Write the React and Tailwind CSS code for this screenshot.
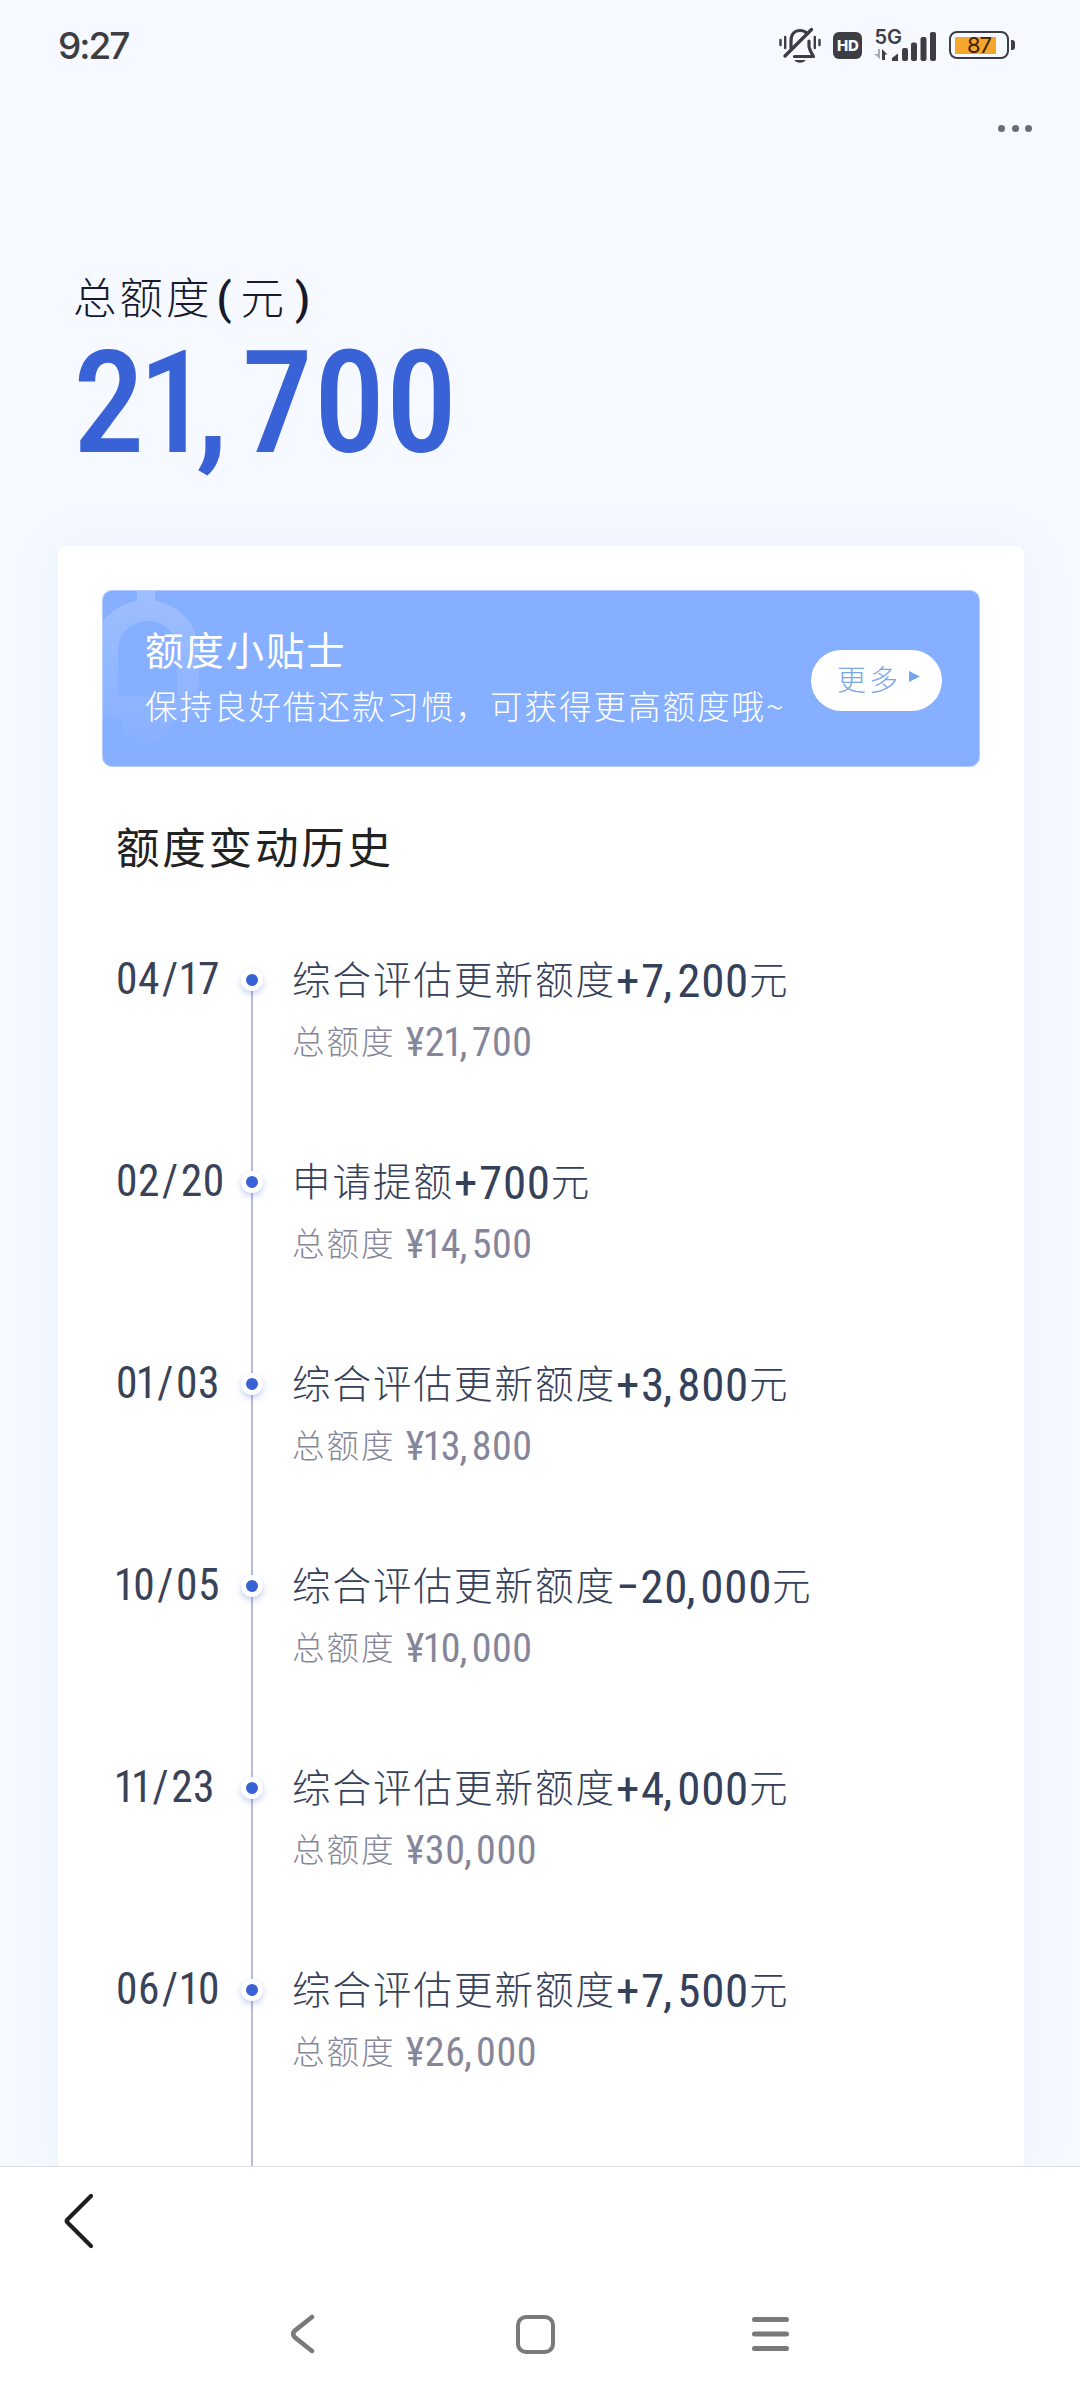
const history = [
  { date: "04/17", title: "综合评估更新额度", change: "+7,200", total: "21,700" },
  { date: "02/20", title: "申请提额", change: "+700", total: "14,500" },
  { date: "01/03", title: "综合评估更新额度", change: "+3,800", total: "13,800" },
  { date: "10/05", title: "综合评估更新额度", change: "−20,000", total: "10,000" },
  { date: "11/23", title: "综合评估更新额度", change: "+4,000", total: "30,000" },
  { date: "06/10", title: "综合评估更新额度", change: "+7,500", total: "26,000" },
];

// narrow "1", wide comma and slash, like the DIN digits of the brand
const spacing = {
  1: "-ml-[0.05em] -mr-[0.06em]",
  ",": "-ml-[0.04em] mr-[0.09em]",
  "/": "mx-[0.05em]",
  "+": "mr-[0.02em]",
};

function Digits({ value, className = "" }) {
  return (
    <span className={`font-['Roboto_Condensed','Roboto',sans-serif] ${className}`}>
      {value.split(/([1,/+])/).map((part, i) =>
        spacing[part] ? (
          <span key={i} className={spacing[part]}>
            {part}
          </span>
        ) : (
          part
        )
      )}
    </span>
  );
}

function MutedBell() {
  return (
    <svg width="42" height="38" viewBox="0 0 42 38" fill="none" stroke="#3c3e44" strokeLinecap="round" strokeLinejoin="round">
      <path d="M12 21V14C12 7 16 3.5 21 3.5C24 3.5 26.500 4.500 28 6.500" strokeWidth="3.2" />
      <path d="M30 14V19C30 22 31 23.500 34.500 29.500H15.500" strokeWidth="3.2" />
      <path d="M6 29L32.500 2.500" strokeWidth="3.4" />
      <path d="M15.500 33H26.500C25 36.500 17 36.500 15.500 33Z" fill="#3c3e44" stroke="none" />
      <path d="M1.500 13V18M6.200 10V21M35.800 10V21M40.500 13V18" strokeWidth="2.4" />
    </svg>
  );
}

function StatusBar() {
  return (
    <div className="flex h-[90px] shrink-0 justify-between pl-[58px] pr-[65px] text-[#3c3e44]">
      <span className="mt-[24px] font-['Inter',sans-serif] text-[37px] leading-[44px] font-medium tracking-[-2px]">
        9:27
      </span>
      <div className="mt-[27px] flex h-[38px] items-start">
        <MutedBell />
        <span className="mt-[5px] ml-[12px] flex h-[27px] w-[29px] items-center justify-center rounded-[6px] bg-[#3c3e44] font-['Inter',sans-serif] text-[15px] leading-none font-extrabold text-[#f6f9ff]">
          HD
        </span>
        <div className="ml-[12px] flex flex-col">
          <span className="mt-[2px] h-[17px] font-['Inter',sans-serif] text-[20px] leading-[17px] font-semibold">5G</span>
          <svg width="14" height="11" viewBox="0 0 14 11" className="mt-[3px]">
            <path d="M4 0H6V10L0 5H4Z" fill="#a9abb0" />
            <path d="M8 11V0L13.500 5.500H11V11Z" fill="#3c3e44" />
          </svg>
        </div>
        <svg width="46" height="30" viewBox="0 0 46 30" fill="#3c3e44" className="mt-[4px] -ml-[11px]">
          <path d="M1 30V27L7 22.500V30Z" />
          <rect x="11" y="17" width="6" height="13" rx="2" />
          <rect x="20" y="11.500" width="6" height="18.500" rx="2" />
          <rect x="29.500" y="6" width="6" height="24" rx="2" />
          <rect x="39" y="1" width="6" height="29" rx="2" />
        </svg>
        <div className="mt-[4px] ml-[12px] flex items-center">
          <div className="flex h-[28px] w-[60px] items-center rounded-[8px] border-[2.500px] border-[#3c3e44] pl-[4px]">
            <div className="flex h-[17px] w-[41px] items-center justify-center bg-[#f5a62f] pl-[7px] font-['Inter',sans-serif] text-[22px] leading-none tracking-[-1px] text-[#3d2400]">
              87
            </div>
          </div>
          <div className="ml-[2px] h-[10px] w-[4px] rounded-r-[3px] bg-[#3c3e44]" />
        </div>
      </div>
    </div>
  );
}

function BannerBell() {
  return (
    <svg width="110" height="170" viewBox="0 0 110 170" className="absolute top-0 left-0">
      <defs>
        <linearGradient id="bell" x1="0" y1="0" x2="0" y2="1">
          <stop offset="0" stopColor="#fff" stopOpacity="0.2" />
          <stop offset="1" stopColor="#fff" stopOpacity="0.02" />
        </linearGradient>
      </defs>
      <path
        fill="url(#bell)"
        fillRule="evenodd"
        d="M34 0H52V10C78 14 96 36 96 62V127H-10V62C-10 36 8 14 34 10ZM15 60V105H74V60C74 42 62 30 45 30C28 30 15 42 15 60ZM18 127C20 160 68 160 71 127Z"
      />
    </svg>
  );
}

function TipBanner() {
  return (
    <div className="relative flex h-[177px] items-center justify-between overflow-hidden rounded-[10px] border border-[#b4cdff] bg-[#86afff] pr-[37px] pl-[42px] text-white">
      <BannerBell />
      <div className="relative pb-[9px]">
        <p className="font-['Noto_Sans_CJK_SC',sans-serif] text-[38.500px] leading-[61px] font-normal tracking-[1.800px]">
          额度小贴士
        </p>
        <p className="text-[32.500px] leading-[52px] tracking-[2px] whitespace-nowrap">
          保持良好借还款习惯，可获得更高额度哦~
        </p>
      </div>
      <button className="mt-[3px] flex h-[61px] w-[131px] shrink-0 items-center rounded-full bg-white pb-[2px] pl-[26px] text-[29px] tracking-[3px] text-[#7ba6e6]">
        更多
        <svg width="11" height="11" viewBox="0 0 11 11" className="mb-[5px] ml-[8px]">
          <path d="M0 0L11 5.500L0 11Z" fill="#76a5ea" />
        </svg>
      </button>
    </div>
  );
}

function HistoryRow({ date, title, change, total }) {
  return (
    <li className="group flex h-[202px] last:h-[210px]">
      <Digits value={date} className="w-[124px] text-[43.500px] leading-[59px] tracking-[0.01em] whitespace-nowrap text-[#3a4258]" />
      <div className="flex w-[23px] flex-col items-center">
        <div className="h-[20px] w-[2px] bg-[#b7bad8] group-first:invisible" />
        <div className="z-10 -my-px flex size-[22px] shrink-0 items-center justify-center rounded-full bg-white shadow-[0_3px_6px_rgba(58,98,215,0.3)]">
          <div className="size-[12px] rounded-full bg-[#3a62d7]" />
        </div>
        <div className="w-[2px] flex-1 bg-[#b7bad8]" />
      </div>
      <div className="-mt-[3px] pl-[29px]">
        <p className="text-[38.500px] leading-[60px] tracking-[2px] whitespace-nowrap text-[#35405a]">
          {title}
          <Digits value={change} className="align-[-3px] text-[47px] leading-none tracking-[0.015em]" />
          元
        </p>
        <p className="mt-[3px] text-[32.500px] leading-[60px] tracking-[2px] whitespace-nowrap text-[#85869a]">
          总额度 <Digits value={`¥${total}`} className="ml-[1px] align-[-2px] text-[40px] leading-none tracking-[0.015em]" />
        </p>
      </div>
    </li>
  );
}

function BottomBar() {
  return (
    <div className="flex h-[234px] shrink-0 flex-col border-t border-[#dfe1e6] bg-white">
      <svg width="32" height="58" viewBox="0 0 32 58" fill="none" className="mt-[25px] ml-[63px]">
        <path d="M28 4L4.500 27.500Q3 29 4.500 30.500L28 54" stroke="#1e1e1e" strokeWidth="4.200" strokeLinecap="round" />
      </svg>
      <div className="mt-[64px] flex items-center pl-[289px] text-[#7a7a7a]">
        <svg width="27" height="40" viewBox="0 0 27 40" fill="none" stroke="currentColor" strokeWidth="4.600" strokeLinecap="round">
          <path d="M23 3L5.500 17Q3 20 5.500 23L23 37" />
        </svg>
        <div className="ml-[200px] size-[39px] rounded-[10px] border-[4.600px] border-[#7a7a7a]" />
        <svg width="37" height="34" viewBox="0 0 37 34" stroke="currentColor" strokeWidth="5" strokeLinecap="round" className="ml-[197px]">
          <path d="M2.500 2.500H34.500M2.500 17H34.500M2.500 31.500H34.500" />
        </svg>
      </div>
    </div>
  );
}

export default function App() {
  return (
    <div className="flex h-[2400px] w-[1080px] flex-col overflow-hidden bg-[#f6f9ff] font-['Noto_Sans_CJK_SC_Light','Noto_Sans_CJK_SC',sans-serif]">
      <StatusBar />
      <div className="flex min-h-0 flex-1 flex-col overflow-hidden">
        <div className="mt-[35px] mr-[48px] flex justify-end gap-[6.500px]">
          <i className="size-[7px] rounded-full bg-[#6b6c70]" />
          <i className="size-[7px] rounded-full bg-[#6b6c70]" />
          <i className="size-[7px] rounded-full bg-[#6b6c70]" />
        </div>
        <div className="mt-[134px] flex flex-col pl-[73px]">
          <p className="text-[43.500px] leading-[60px] tracking-[3px] text-[#161a2c]">
            总额度<span className="mx-[4px] font-['Roboto'] font-medium">(</span>
            <span className="ml-[2px]">元</span>
            <span className="ml-[8px] font-['Roboto'] font-medium">)</span>
          </p>
          <Digits value="21,700" className="mt-[13px] text-[143px] leading-[120px] font-medium tracking-[0.005em] text-[#3a62d7]" />
        </div>
        <div className="mt-[83px] mr-[56px] ml-[58px] flex-1 rounded-[8px] bg-white px-[44px] pt-[44px] shadow-[0_0_56px_rgba(70,125,255,0.07)]">
          <TipBanner />
          <h2 className="mt-[49px] ml-[14px] font-['Noto_Sans_CJK_SC',sans-serif] text-[43.500px] leading-[60px] font-normal tracking-[2.800px] text-[#222]">
            额度变动历史
          </h2>
          <ul className="mt-[74px] ml-[14px]">
            {history.map((row) => (
              <HistoryRow key={row.date} {...row} />
            ))}
          </ul>
        </div>
      </div>
      <BottomBar />
    </div>
  );
}
